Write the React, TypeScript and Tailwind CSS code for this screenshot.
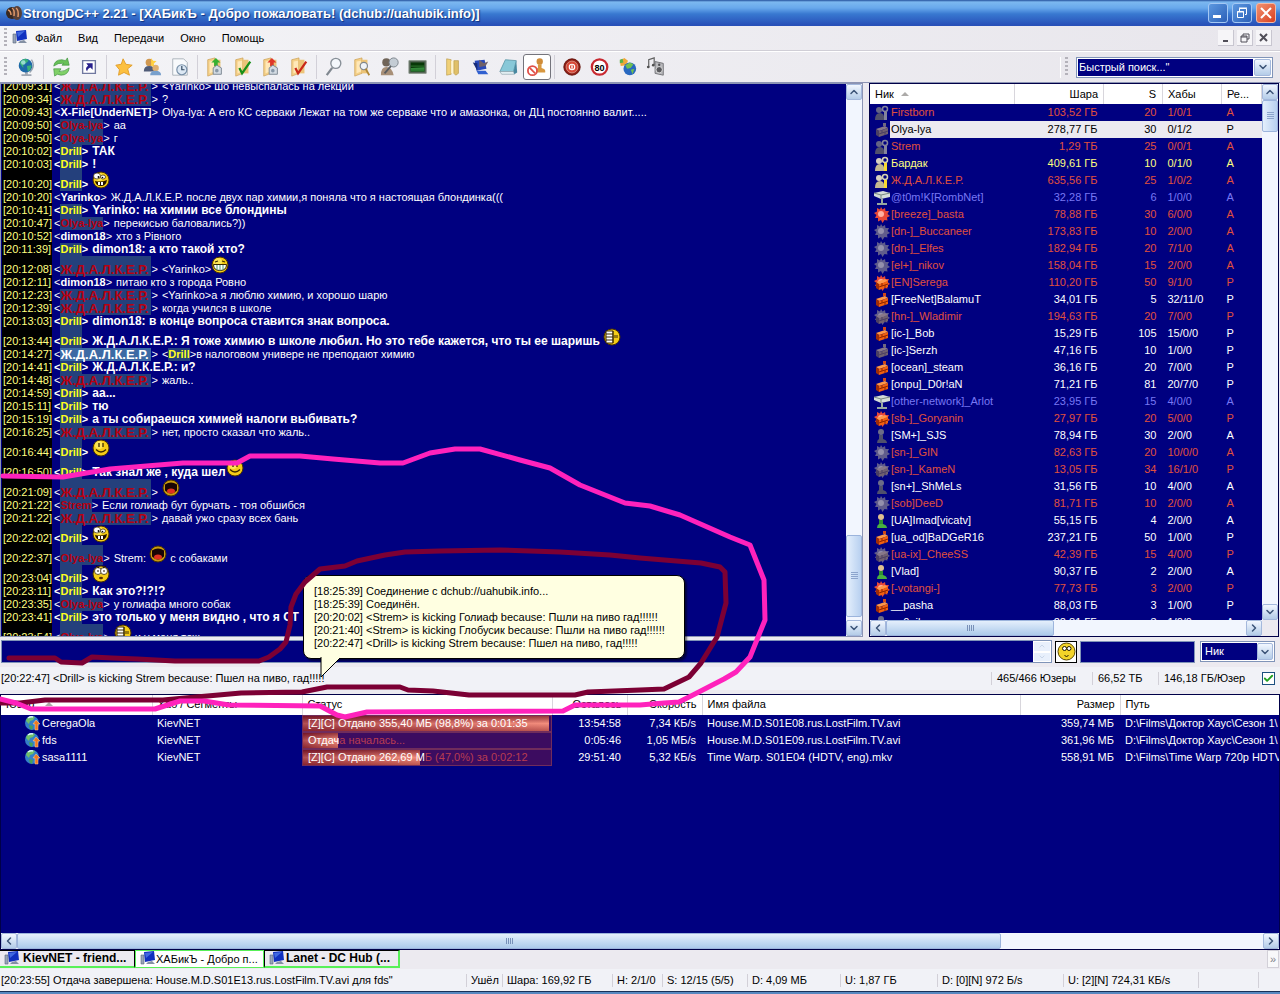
import React from "react";
import { Check, ChevronDown, ChevronLeft, ChevronRight, ChevronUp } from "lucide-react";

type EmoteKind = "crazy" | "grin" | "smile" | "shout" | "wow" | "half";

type ChatLine = {
  time: string;
  nick: string;
  style: "red" | "me" | "plain" | "fav";
  parts: (string | { emote: EmoteKind } | { nick: string })[];
};

const chat: ChatLine[] = [
  { time: "20:09:31", nick: "Ж.Д.А.Л.К.Е.Р.", style: "red", parts: ["<Yarinko> шо невыспалась на лекции"] },
  { time: "20:09:34", nick: "Ж.Д.А.Л.К.Е.Р.", style: "red", parts: ["?"] },
  { time: "20:09:43", nick: "X-File[UnderNET]", style: "plain", parts: ["Olya-lya: А его КС серваки Лежат на том же серваке что и амазонка, он ДЦ постоянно валит....."] },
  { time: "20:09:50", nick: "Olya-lya", style: "red", parts: ["аа"] },
  { time: "20:09:50", nick: "Olya-lya", style: "red", parts: ["г"] },
  { time: "20:10:02", nick: "Drill", style: "me", parts: ["ТАК"] },
  { time: "20:10:03", nick: "Drill", style: "me", parts: ["!"] },
  { time: "20:10:20", nick: "Drill", style: "me", parts: [{ emote: "crazy" }] },
  { time: "20:10:20", nick: "Yarinko", style: "plain", parts: ["Ж.Д.А.Л.К.Е.Р. после двух пар химии,я поняла что я настоящая блондинка((("] },
  { time: "20:10:41", nick: "Drill", style: "me", parts: ["Yarinko: на химии все блондины"] },
  { time: "20:10:47", nick: "Olya-lya", style: "red", parts: ["перекисью баловались?))"] },
  { time: "20:10:52", nick: "dimon18", style: "plain", parts: ["хто з Рівного"] },
  { time: "20:11:39", nick: "Drill", style: "me", parts: ["dimon18: а кто такой хто?"] },
  { time: "20:12:08", nick: "Ж.Д.А.Л.К.Е.Р.", style: "red", parts: ["<Yarinko>", { emote: "grin" }] },
  { time: "20:12:11", nick: "dimon18", style: "plain", parts: ["питаю кто з города Ровно"] },
  { time: "20:12:23", nick: "Ж.Д.А.Л.К.Е.Р.", style: "red", parts: ["<Yarinko>а я люблю химию, и хорошо шарю"] },
  { time: "20:12:39", nick: "Ж.Д.А.Л.К.Е.Р.", style: "red", parts: ["когда учился в школе"] },
  { time: "20:13:03", nick: "Drill", style: "me", parts: ["dimon18: в конце вопроса ставится знак вопроса."] },
  { time: "20:13:44", nick: "Drill", style: "me", parts: ["Ж.Д.А.Л.К.Е.Р.: Я тоже химию в школе любил. Но это тебе кажется, что ты ее шаришь ", { emote: "half" }] },
  { time: "20:14:27", nick: "Ж.Д.А.Л.К.Е.Р.", style: "fav", parts: ["<", { nick: "Drill" }, ">в налоговом универе не преподают химию"] },
  { time: "20:14:41", nick: "Drill", style: "me", parts: ["Ж.Д.А.Л.К.Е.Р.: и?"] },
  { time: "20:14:48", nick: "Ж.Д.А.Л.К.Е.Р.", style: "red", parts: ["жаль.."] },
  { time: "20:14:59", nick: "Drill", style: "me", parts: ["аа..."] },
  { time: "20:15:11", nick: "Drill", style: "me", parts: ["тю"] },
  { time: "20:15:19", nick: "Drill", style: "me", parts: ["а ты собираешся химией налоги выбивать?"] },
  { time: "20:16:25", nick: "Ж.Д.А.Л.К.Е.Р.", style: "red", parts: ["нет, просто сказал что жаль.."] },
  { time: "20:16:44", nick: "Drill", style: "me", parts: [{ emote: "smile" }] },
  { time: "20:16:50", nick: "Drill", style: "me", parts: ["Так знал же , куда шел", { emote: "smile" }] },
  { time: "20:21:09", nick: "Ж.Д.А.Л.К.Е.Р.", style: "red", parts: [{ emote: "shout" }] },
  { time: "20:21:22", nick: "Strem", style: "red", parts: ["Если голиаф бут бурчать - тоя обшибся"] },
  { time: "20:21:22", nick: "Ж.Д.А.Л.К.Е.Р.", style: "red", parts: ["давай ужо сразу всех бань"] },
  { time: "20:22:02", nick: "Drill", style: "me", parts: [{ emote: "crazy" }] },
  { time: "20:22:37", nick: "Olya-lya", style: "red", parts: ["Strem: ", { emote: "shout" }, " с собаками"] },
  { time: "20:23:04", nick: "Drill", style: "me", parts: [{ emote: "wow" }] },
  { time: "20:23:11", nick: "Drill", style: "me", parts: ["Как это?!?!?"] },
  { time: "20:23:35", nick: "Olya-lya", style: "red", parts: ["у голиафа много собак"] },
  { time: "20:23:41", nick: "Drill", style: "me", parts: ["это только у меня видно , что я СТ"] },
  { time: "20:23:54", nick: "Olya-lya", style: "red", parts: [{ emote: "half" }, " и у меня тож"] },
];

type UserRow = [icon: string, nick: string, share: string, slots: string, hubs: string, mode: string, tone: string];

const users: UserRow[] = [
  ["keyGray", "Firstborn", "103,52 ГБ", "20", "1/0/1", "A", "red"],
  ["brickGray", "Olya-lya", "278,77 ГБ", "30", "0/1/2", "P", "selected"],
  ["keyGray", "Strem", "1,29 ТБ", "25", "0/0/1", "A", "red"],
  ["key", "Бардак", "409,61 ГБ", "10", "0/1/0", "A", "yellow"],
  ["key", "Ж.Д.А.Л.К.Е.Р.", "635,56 ГБ", "25", "1/0/2", "A", "red"],
  ["server", "@t0m!K[RombNet]", "32,28 ГБ", "6", "1/0/0", "A", "blue"],
  ["gearRed", "[breeze]_basta", "78,88 ГБ", "30", "6/0/0", "A", "red"],
  ["gearGray", "[dn-]_Buccaneer", "173,83 ГБ", "10", "2/0/0", "A", "red"],
  ["gearGray", "[dn-]_Elfes", "182,94 ГБ", "20", "7/1/0", "A", "red"],
  ["gearGray", "[el+]_nikov", "158,04 ГБ", "15", "2/0/0", "A", "red"],
  ["gearBrick", "[EN]Serega", "110,20 ГБ", "50", "9/1/0", "P", "red"],
  ["brick", "[FreeNet]BalamuT", "34,01 ГБ", "5", "32/11/0", "P", "white"],
  ["gearBrickGray", "[hn-]_Wladimir", "194,63 ГБ", "20", "7/0/0", "P", "red"],
  ["brick", "[ic-]_Bob", "15,29 ГБ", "105", "15/0/0", "P", "white"],
  ["brickGray", "[ic-]Serzh", "47,16 ГБ", "10", "1/0/0", "P", "white"],
  ["brick", "[ocean]_steam", "36,16 ГБ", "20", "7/0/0", "P", "white"],
  ["brick", "[onpu]_D0r!aN", "71,21 ГБ", "81", "20/7/0", "P", "white"],
  ["server", "[other-network]_Arlot", "23,95 ГБ", "15", "4/0/0", "A", "blue"],
  ["gearBrick", "[sb-]_Goryanin", "27,97 ГБ", "20", "5/0/0", "P", "red"],
  ["personGray", "[SM+]_SJS", "78,94 ГБ", "30", "2/0/0", "A", "white"],
  ["gearGray", "[sn-]_GIN", "82,63 ГБ", "20", "10/0/0", "A", "red"],
  ["gearBrickGray", "[sn-]_KameN", "13,05 ГБ", "34", "16/1/0", "P", "red"],
  ["personGray", "[sn+]_ShMeLs", "31,56 ГБ", "10", "4/0/0", "A", "white"],
  ["gearGray", "[sob]DeeD", "81,71 ГБ", "10", "2/0/0", "A", "red"],
  ["person", "[UA]Imad[vicatv]", "55,15 ГБ", "4", "2/0/0", "A", "white"],
  ["brick", "[ua_od]BaDGeR16", "237,21 ГБ", "50", "1/0/0", "P", "white"],
  ["gearBrickGray", "[ua-ix]_CheeSS", "42,39 ГБ", "15", "4/0/0", "P", "red"],
  ["person", "[Vlad]", "90,37 ГБ", "2", "2/0/0", "A", "white"],
  ["gearBrick", "[-votangi-]", "77,73 ГБ", "3", "2/0/0", "P", "red"],
  ["brick", "__pasha", "88,03 ГБ", "3", "1/0/0", "P", "white"],
  ["personGray", "_a0nil", "22,81 ГБ", "3", "1/0/0", "A", "white"],
];

const tones: Record<string, string> = {
  red: "text-[#e0503c]",
  white: "text-white",
  yellow: "text-[#ffff80]",
  blue: "text-[#7878f4]",
  selected: "text-black",
};

const transfers = [
  { user: "CeregaOla", fill: 99, done: "[Z][C] Отдано 355,40 МБ (98,8%) за 0:01:35", rest: "", left: "13:54:58", speed: "7,34 КБ/s", file: "House.M.D.S01E08.rus.LostFilm.TV.avi", size: "359,74 МБ", path: "D:\\Films\\Доктор Хаус\\Сезон 1\\" },
  { user: "fds", fill: 14, done: "Отдач", rest: "а началась...", left: "0:05:46", speed: "1,05 МБ/s", file: "House.M.D.S01E09.rus.LostFilm.TV.avi", size: "361,96 МБ", path: "D:\\Films\\Доктор Хаус\\Сезон 1\\" },
  { user: "sasa1111", fill: 47, done: "[Z][C] Отдано 262,69 М", rest: "Б (47,0%) за 0:02:12", left: "29:51:40", speed: "5,32 КБ/s", file: "Time Warp. S01E04 (HDTV, eng).mkv", size: "558,91 МБ", path: "D:\\Films\\Time Warp 720p HDTV" },
];

function Emote({ kind }: { kind: EmoteKind }) {
  return (
    <svg className="w-[18px] h-[18px] shrink-0 self-start" viewBox="0 0 18 18">
      <circle cx="9" cy="9" r="8" fill={kind === "shout" ? "#c89a10" : "#f4cc18"} stroke="#4a3200" strokeWidth="1" />
      {kind !== "shout" && <circle cx="7" cy="6" r="4" fill="#fff070" opacity=".7" />}
      {kind === "smile" && (
        <g stroke="#3a2800" fill="none" strokeWidth="1.3">
          <path d="M7 4v4M11 4v4M4 10.500q5 5 10 0" />
        </g>
      )}
      {kind === "grin" && (
        <g>
          <path d="M4 6l3-1M11 5l3 1" stroke="#3a2800" strokeWidth="1.300" />
          <path d="M2.500 8.500h13q0 6-6.500 6t-6.500-6z" fill="#fff" stroke="#3a2800" />
          <path d="M6 9v5M9 9v6M12 9v5" stroke="#4a9a70" />
        </g>
      )}
      {kind === "crazy" && (
        <g>
          <ellipse cx="5" cy="5" rx="3.500" ry="3" fill="#fff" stroke="#3a2800" strokeWidth=".7" />
          <ellipse cx="11" cy="6" rx="2.500" ry="2" fill="#fff" stroke="#3a2800" strokeWidth=".7" />
          <circle cx="6.500" cy="6" r=".9" /><circle cx="10.500" cy="6.500" r=".8" />
          <path d="M3 10q6 1.500 12-1q-1 6-6 6t-6-5z" fill="#201000" />
          <path d="M6 11h2v3H6zM9 11h2v3H9z" fill="#fff" />
        </g>
      )}
      {kind === "shout" && (
        <g>
          <path d="M3 5.500q6-4 12 0v6q-6 6-12 0z" fill="#1a0505" />
          <ellipse cx="9" cy="12" rx="4" ry="2.500" fill="#e03020" />
        </g>
      )}
      {kind === "wow" && (
        <g>
          <circle cx="6" cy="6" r="3.500" fill="#fff" stroke="#3a2800" strokeWidth=".8" />
          <circle cx="12" cy="6" r="3.500" fill="#fff" stroke="#3a2800" strokeWidth=".8" />
          <path d="M5 6h2M11 6h2M4 1l3 2M14 1l-3 2" stroke="#201000" />
          <ellipse cx="9" cy="13" rx="2" ry="1.300" fill="#5a3000" />
        </g>
      )}
      {kind === "half" && (
        <g>
          <path d="M3 3h7v12H3z" fill="#fff" stroke="#3a2800" />
          <path d="M3 6h7M3 9h7M3 12h7M10 3v12M12 7v3M14 7v3" stroke="#3a2800" />
        </g>
      )}
    </svg>
  );
}

function UserIcon({ kind }: { kind: string }) {
  const gray = kind.endsWith("Gray");
  const gear = kind.startsWith("gear");
  return (
    <svg className="w-4 h-4 shrink-0" viewBox="0 0 16 16">
      {gear && (
        <g>
          <path d="M7 0l1.500 2.500L11 1l.5 3L15 4l-1.500 3L16 9l-3 1.500.5 3-3-.5L8.500 16 7 13l-3 1.500L4 11 1 11l1.500-3L0 6l3-1.500L3 1l3 1.500z" fill={gray ? "#605c8c" : "#e84838"} />
          <circle cx="7" cy="7" r="3" fill={gray ? "#9490ac" : "#ffb0a0"} />
        </g>
      )}
      {kind.toLowerCase().includes("brick") && (
        <g>
          <path d="M2 7l9-3 3 2-9 3z" fill={gray ? "#887888" : "#ff9848"} />
          <path d="M2 7l3 2v6l-3-2z" fill={gray ? "#4c4064" : "#a02c08"} />
          <path d="M5 9l9-3v6l-9 3z" fill={gray ? "#706070" : "#f06010"} />
          <path d="M5 12l9-3M8 8v3M11 10v3" stroke={gray ? "#4c4064" : "#902400"} />
          {!gear && <path d="M9 1h3v3H9z" fill={gray ? "#706880" : "#d04818"} />}
        </g>
      )}
      {kind.startsWith("key") && (
        <g>
          <circle cx="5" cy="5" r="3" fill={gray ? "#646484" : "#d8d0c0"} />
          <path d="M1 15q0-7 5-7t4 7z" fill={gray ? "#50506c" : "#c4b890"} />
          <circle cx="11" cy="4" r="2.500" fill="none" stroke={gray ? "#84849c" : "#d8d4b0"} strokeWidth="1.500" />
          <path d="M10 7h3v8h-3z" fill={gray ? "#84849c" : "#f8d830"} />
        </g>
      )}
      {kind === "server" && (
        <g>
          <path d="M0 3l9-2 7 2v4l-9 2-7-3z" fill="#d4dcd8" />
          <path d="M0 3l7 2 9-2M7 5v4" stroke="#788880" fill="none" />
          <path d="M7 9h2v4h4v2H3v-2h4z" fill="#98a8a0" />
        </g>
      )}
      {kind.startsWith("person") && (
        <g>
          <circle cx="7" cy="4" r="3" fill={gray ? "#6c6c88" : "#e0c090"} />
          <path d="M3 15q0-3 2-4V7h4v4q4 1 4 4z" fill={gray ? "#50506c" : "#48b040"} />
          {!gray && <path d="M5 7h4v4H5z" fill="#309030" />}
        </g>
      )}
    </svg>
  );
}

function HubIcon() {
  return (
    <svg className="w-4 h-4 shrink-0" viewBox="0 0 16 16">
      <path d="M1 4h3v9H1z" fill="#98a4b8" stroke="#586478" strokeWidth=".6" />
      <path d="M4 1l10-1 1 9-10 2z" fill="#1030c0" />
      <path d="M5 2l8-1-7 6z" fill="#4068e0" />
      <path d="M8 11l4-1 3 3H6z" fill="#8490a4" />
    </svg>
  );
}

function Globe({ arrow }: { arrow?: boolean }) {
  return (
    <svg className="w-4 h-4 shrink-0" viewBox="0 0 16 16">
      <circle cx="7" cy="8" r="7" fill="#3480c8" />
      <path d="M1 6q1-5 6-5l3 1-2 3-3 1-1 3z" fill="#70c068" />
      <path d="M4 10l4 1-1 4q-3-1-3-5z" fill="#48a058" />
      <path d="M3 3q3-2 5-1" stroke="#d8f0ff" strokeWidth="1.500" fill="none" />
      {arrow && <path d="M11 5l4 4h-2v6h-3V9H8z" fill="#f07820" stroke="#ffd0a0" strokeWidth=".5" />}
    </svg>
  );
}

function Folder() {
  return (
    <g>
      <path d="M3 3l8-2v17l-8 3z" fill="#f4d088" stroke="#c89848" strokeWidth=".7" />
      <path d="M11 3h6v15h-6z" fill="#ecc478" />
      <path d="M5 5l5-1v12l-5 2z" fill="#ffe8b8" />
    </g>
  );
}

const toolIcons: Record<string, React.ReactNode> = {
  "Подключение": (
    <g>
      <path d="M6 19h11v2H6zM10 16h3v4h-3z" fill="#a0a8b4" />
      <path d="M17 3q5 7-2 14" stroke="#98a4b0" strokeWidth="1.500" fill="none" />
      <circle cx="10.500" cy="9.500" r="7.500" fill="#1c68a8" />
      <path d="M4 7q2-5 7-5l3 2-3 3-3 1v4zM12 10l5-1q0 5-4 7z" fill="#38b078" />
      <circle cx="8" cy="6" r="2.500" fill="#c0f0f0" opacity=".7" />
    </g>
  ),
  "Переподключить": (
    <g>
      <path d="M3 10q1-7 9-7l4 1 2-3 2 8h-8l2-2q-6-1-11 3z" fill="#68c058" stroke="#389038" strokeWidth=".7" />
      <path d="M20 12q-1 8-9 8l-4-1-3 2-1-8h8l-2 3q6 0 11-4z" fill="#80d068" stroke="#389038" strokeWidth=".7" />
    </g>
  ),
  "Ярлык": (
    <g>
      <path d="M4 4h14v14H4z" fill="#fff" stroke="#7078a0" strokeWidth="1.500" />
      <path d="M8 7h7v7l-2.500-2.500Q9 13 9 16q-3-4 1-6.500z" fill="#28208c" />
    </g>
  ),
  "Избранные": <path d="M10 2l3 6 7 1-5 4 2 7-6-3-6 3 1-6-4-5 6-1z" fill="#fcc040" stroke="#e09c28" />,
  "Пользователи": (
    <g>
      <circle cx="8" cy="6" r="4" fill="#d09850" /><path d="M2 16q0-6 6-6t6 6z" fill="#505c78" />
      <path d="M10 1l2 3 4 .5-3 3 1 4-4-2z" fill="#ffd040" />
      <circle cx="15" cy="12" r="3.500" fill="#e0b070" /><path d="M9 20q0-5 6-5t6 5z" fill="#78a0cc" />
    </g>
  ),
  "Последние хабы": (
    <g>
      <path d="M3 2h12l4 4v14H3z" fill="#f8fafc" stroke="#a8b0b8" />
      <circle cx="13" cy="14" r="5.500" fill="#dce8f4" stroke="#7890a8" strokeWidth="1.300" />
      <path d="M13 10v4h3" stroke="#304860" strokeWidth="1.300" fill="none" />
    </g>
  ),
  "Очередь": (
    <g><Folder /><path d="M12 1l5 5h-3v4h-4V6H7z" fill="#38b030" /><path d="M9 12l4-3 5 3v7H9z" fill="#d4dce4" stroke="#788490" /><circle cx="13" cy="15" r="2" fill="#8898a8" /></g>
  ),
  "Скачанные": (
    <g><Folder /><path d="M7 12l3 6L19 5" fill="none" stroke="#189018" strokeWidth="2.500" /></g>
  ),
  "Ожидающие": (
    <g><Folder /><path d="M12 1l5 5h-3v4h-4V6H7z" fill="#e03828" /><path d="M9 12l4-3 5 3v7H9z" fill="#d4dce4" stroke="#788490" /><circle cx="13" cy="15" r="2" fill="#8898a8" /></g>
  ),
  "Отданные": (
    <g><Folder /><path d="M7 12l3 6L19 5" fill="none" stroke="#c82818" strokeWidth="2.500" /></g>
  ),
  "Поиск": (
    <g>
      <circle cx="13" cy="7" r="5.500" fill="#f4f8fc" stroke="#889098" strokeWidth="1.500" />
      <path d="M9 12l-6 8" stroke="#808890" strokeWidth="2.500" />
    </g>
  ),
  "ADL поиск": (
    <g><Folder /><circle cx="13" cy="10" r="4" fill="#f0f4f8" stroke="#808890" strokeWidth="1.300" /><path d="M15 13l4 7" stroke="#b08838" strokeWidth="2" /></g>
  ),
  "Слежение": (
    <g>
      <circle cx="7" cy="6" r="4.500" fill="#706458" /><path d="M1 20q0-9 6-9t8 9z" fill="#a89078" />
      <circle cx="15" cy="6" r="5" fill="#c4ccd4" stroke="#788088" /><path d="M12 10l-7 8" stroke="#585c60" strokeWidth="2" />
    </g>
  ),
  "Статистика": (
    <g>
      <path d="M1 4h19v14H1z" fill="#506050" stroke="#889488" /><path d="M3 6h15v10H3z" fill="#083808" />
      <path d="M3 12l15-1v5H3z" fill="#287830" /><path d="M3 10h15M3 13h15" stroke="#48a048" strokeWidth=".7" />
    </g>
  ),
  "Файл-лист": (
    <g>
      <path d="M4 2l5 1v16l-5 1z" fill="#f0d078" stroke="#b89848" strokeWidth=".7" /><path d="M9 4h4v14H9z" fill="#fff4d0" />
      <path d="M12 4h5v14l-3 2-2-2z" fill="#e0c068" stroke="#b89848" strokeWidth=".7" />
    </g>
  ),
  "Настройки": (
    <g>
      <path d="M4 4l11-1 2 10-11 2z" fill="#2848b8" /><path d="M6 15h10l3 4H8z" fill="#3060d0" />
      <path d="M9 3l5 4 5-2-3 5-7 1z" fill="#706068" /><path d="M2 6l5 1v8z" fill="#182c78" />
    </g>
  ),
  "Блокнот": (
    <g>
      <path d="M7 3l12 1-3 12H1z" fill="#88c8d8" stroke="#5090a0" strokeWidth=".8" /><path d="M1 16h15l1 3H3z" fill="#e4f0f4" stroke="#88a0a8" strokeWidth=".7" />
      <path d="M16 16l3-12 1 13-3 2z" fill="#4888a0" />
    </g>
  ),
  "Отошёл": (
    <g>
      <circle cx="14" cy="5" r="3.500" fill="#d08c38" /><path d="M8 17q0-3 4-5V8h4v4q5 1 4 5z" fill="#d89840" />
      <circle cx="6" cy="15" r="5" fill="#fff" stroke="#e05048" strokeWidth="2" /><path d="M3 12l6 6" stroke="#e05048" strokeWidth="2" />
    </g>
  ),
  "Выключение": (
    <g>
      <circle cx="11" cy="11" r="9" fill="#901c14" stroke="#601008" /><circle cx="11" cy="11" r="6.500" fill="#d84838" stroke="#d89080" />
      <circle cx="11" cy="11" r="3" fill="none" stroke="#fff" strokeWidth="1.300" /><path d="M11 9v4" stroke="#fff" strokeWidth="1.500" />
    </g>
  ),
  "Ограничитель": (
    <g>
      <circle cx="10.500" cy="11" r="8.500" fill="#fff" stroke="#c82830" strokeWidth="2.500" />
      <text x="10.500" y="15" textAnchor="middle" className="text-[10px] font-bold">80</text>
    </g>
  ),
  "Обновление": (
    <g>
      <path d="M2 4l5-3 4 3-2 5-6 1z" fill="#f0a838" /><path d="M2 3l3-1 1 4-4 1z" fill="#58b048" />
      <circle cx="13" cy="13" r="7" fill="#2868c0" /><path d="M8 9l5-3 4 2-3 4-4 1zM14 14l4-1-2 6z" fill="#70c050" />
    </g>
  ),
  "Музыка": (
    <g>
      <path d="M3 11V3l6-2v8" fill="none" stroke="#606060" strokeWidth="1.300" /><circle cx="2.500" cy="11" r="1.500" fill="#505050" /><circle cx="8" cy="9" r="1.500" fill="#505050" />
      <path d="M10 5l9 2v13l-9-2z" fill="#b8b8bc" stroke="#707074" /><circle cx="14.500" cy="14" r="3.500" fill="#58585c" stroke="#e0e0e0" />
      <circle cx="14.500" cy="8.500" r="1.300" fill="#505054" />
    </g>
  ),
};

const toolGroups = [
  ["Подключение"],
  ["Переподключить", "Ярлык"],
  ["Избранные", "Пользователи", "Последние хабы"],
  ["Очередь", "Скачанные", "Ожидающие", "Отданные"],
  ["Поиск", "ADL поиск", "Слежение", "Статистика"],
  ["Файл-лист", "Настройки", "Блокнот", "Отошёл"],
  ["Выключение", "Ограничитель", "Обновление", "Музыка"],
];

function Grip() {
  return <div className="w-[3px] h-5 bg-[repeating-linear-gradient(to_bottom,#b4b2ba_0px,#b4b2ba_2px,transparent_2px,transparent_4px)]" />;
}

const scrollBtn =
  "flex items-center justify-center shrink-0 w-4 h-4 rounded-[2px] border border-[#a4b8dc] bg-linear-to-b from-[#f2f7ff] to-[#b4cce8] text-[#3c5478]";

function ThumbLines() {
  return <div className="w-[7px] h-[8px] bg-[repeating-linear-gradient(to_bottom,#8ca4cc_0px,#8ca4cc_1px,transparent_1px,transparent_2px)]" />;
}

function VScroll({ atEnd, thumb }: { atEnd?: boolean; thumb: string }) {
  return (
    <div className="flex flex-col w-4 shrink-0 bg-[#f2f6fe]">
      <button className={scrollBtn} aria-label="Вверх"><ChevronUp size={12} strokeWidth={3} /></button>
      <div className={`flex flex-col flex-1 min-h-0 ${atEnd ? "justify-end pb-[3px]" : ""}`}>
        <div className={`${thumb} flex items-center justify-center rounded-[2px] border border-[#9cb4dc] bg-linear-to-r from-[#e4effc] to-[#b8d0f0]`}>
          <ThumbLines />
        </div>
      </div>
      <button className={scrollBtn} aria-label="Вниз"><ChevronDown size={12} strokeWidth={3} /></button>
    </div>
  );
}

function HScroll({ thumb }: { thumb: string }) {
  return (
    <div className="flex flex-1 h-4 bg-[#f2f6fe]">
      <button className={scrollBtn} aria-label="Влево"><ChevronLeft size={12} strokeWidth={3} /></button>
      <div className="flex-1 flex">
        <div className={`${thumb} flex items-center justify-center rounded-[2px] border border-[#9cb4dc] bg-linear-to-b from-[#e4effc] to-[#accaea]`}>
          <div className="w-[7px] h-[6px] bg-[repeating-linear-gradient(to_right,#7890b8_0px,#7890b8_1px,transparent_1px,transparent_2px)]" />
        </div>
      </div>
      <button className={scrollBtn} aria-label="Вправо"><ChevronRight size={12} strokeWidth={3} /></button>
    </div>
  );
}

function TitleBar() {
  return (
    <header className="flex items-center h-[26px] shrink-0 pl-[6px] pr-1 bg-[linear-gradient(to_bottom,#24509c_0px,#7cb8f0_2px,#68a8ec_8px,#3878d0_14px,#2850b8_25px)] text-white">
      <svg className="w-4 h-4 mr-px" viewBox="0 0 16 16">
        <ellipse cx="6" cy="8" rx="6" ry="6" fill="#382820" />
        <ellipse cx="11" cy="8" rx="5" ry="7" fill="#584038" />
        <path d="M2 5q3 1 3 5M6 3q3 2 2 8M10 3q3 2 2 9" stroke="#e09868" strokeWidth="1.500" fill="none" />
      </svg>
      <h1 className="flex-1 text-[13px] font-bold whitespace-nowrap [text-shadow:1px_1px_1px_#10307c]">
        StrongDC++ 2.21 - [ХАБикЪ - Добро пожаловать! (dchub://uahubik.info)]
      </h1>
      <div className="flex gap-1">
        <button aria-label="Свернуть" className="flex items-end p-1 w-5 h-5 rounded-[3px] border border-[#a4c8f4] bg-linear-to-br from-[#5c98e0] to-[#2c60b8]">
          <span className="w-2 h-[3px] bg-white" />
        </button>
        <button aria-label="Восстановить" className="flex items-center justify-center w-5 h-5 rounded-[3px] border border-[#a4c8f4] bg-linear-to-br from-[#5c98e0] to-[#2c60b8]">
          <svg className="w-3 h-3" viewBox="0 0 12 12" fill="none" stroke="#fff"><path d="M3.500 4V1.500h7v6H9M3 1h8M1.500 4.500h6v6h-6zM1 5h7" /></svg>
        </button>
        <button aria-label="Закрыть" className="flex items-center justify-center w-5 h-5 rounded-[3px] border border-[#f4b8a4] bg-linear-to-br from-[#f09070] to-[#d83c18]">
          <svg className="w-3 h-3" viewBox="0 0 12 12" stroke="#fff" strokeWidth="2"><path d="M1 1l10 10M11 1L1 11" /></svg>
        </button>
      </div>
    </header>
  );
}

function MenuBar() {
  return (
    <nav className="flex items-center h-[25px] shrink-0 pl-1 pr-2 border-b border-[#d0ced6] bg-linear-to-r from-[#f4f4f7] to-[#e8e6ec]">
      <Grip />
      <div className="ml-[5px] mr-[7px]"><HubIcon /></div>
      <div className="flex-1 flex gap-4">
        {["Файл", "Вид", "Передачи", "Окно", "Помощь"].map((m) => (
          <button key={m}>{m}</button>
        ))}
      </div>
      <div className="flex gap-[3px] text-[#504e58]">
        {["M3 9h5", "M4 4V2h6v5H8M2 4h6v6H2zM2 5h6", "M2 2l7 7M9 2l-7 7"].map((d, i) => (
          <button key={d} aria-label={["Свернуть окно", "Восстановить окно", "Закрыть окно"][i]} className="flex items-center justify-center w-4 h-4 bg-[#f6f5f8] border-r border-b border-[#c8c6d0]">
            <svg className="w-3 h-3" viewBox="0 0 12 12" fill="none" stroke="currentColor" strokeWidth={i === 1 ? 1 : 2}><path d={d} /></svg>
          </button>
        ))}
      </div>
    </nav>
  );
}

function ToolBar() {
  return (
    <div className="flex items-center h-8 shrink-0 pl-1 pr-[7px] border-t border-white border-b border-b-[#8c94b4] bg-linear-to-r from-[#f4f4f7] to-[#e8e6ec]">
      <Grip />
      <div className="flex flex-1 items-center ml-[5px]">
        {toolGroups.map((group, gi) => (
          <React.Fragment key={gi}>
            {gi > 0 && <div className="w-px h-6 mx-[3px] bg-[#d2d0d8]" />}
            {group.map((name) => (
              <button
                key={name}
                aria-label={name}
                className={
                  name === "Отошёл"
                    ? "flex items-center justify-center w-7 h-[26px] rounded-[3px] border border-[#74747c] bg-white"
                    : "flex items-center justify-center w-7 h-[26px]"
                }
              >
                <svg className="w-5 h-5" viewBox="0 0 22 22">{toolIcons[name]}</svg>
              </button>
            ))}
          </React.Fragment>
        ))}
      </div>
      <div className="flex items-center gap-2 border-l border-white pl-1">
        <Grip />
        <div className="flex w-[197px] h-[21px] border border-[#8094b8] bg-white p-px">
          <input aria-label="Быстрый поиск" defaultValue={'Быстрый поиск..."'} className="flex-1 min-w-0 bg-[#000080] text-white pl-px outline-none" />
          <button aria-label="Открыть список" className="flex items-center justify-center w-[17px] ml-px rounded-[2px] border border-[#a4b8dc] bg-linear-to-b from-[#f2f7ff] to-[#b4cce8] text-[#3c5478]">
            <ChevronDown size={12} strokeWidth={3} />
          </button>
        </div>
      </div>
    </div>
  );
}

function ChatRow({ line }: { line: ChatLine }) {
  const tall = line.parts.some((p) => typeof p !== "string" && "emote" in p);
  const bold = line.style === "me";
  const nickStyle = {
    red: "bg-[#24407c] text-[#b80010]",
    me: "bg-[#24407c] text-[#ffff20]",
    plain: "text-white",
    fav: "bg-[#3c6aa4] text-white",
  }[line.style];
  return (
    <li className={`flex shrink-0 ${tall ? "h-5" : "h-[13px]"} ${bold ? "font-bold" : ""}`}>
      <span className="flex items-end w-[50px] shrink-0 pl-px bg-black text-[#ffff80] font-normal">[{line.time}]</span>
      <span className="flex items-end pl-[2px]">&lt;</span>
      <span className={`flex items-end font-bold ${nickStyle} ${line.nick.startsWith("Ж") ? "w-[91px] text-[13px]" : ""}`}>{line.nick}</span>
      <span className="flex items-end pr-1">&gt;</span>
      {line.parts.map((p, i) => {
        if (typeof p === "string") return <span key={i} className={`flex items-end whitespace-pre ${bold ? "text-[12px]" : ""}`}>{p}</span>;
        if ("emote" in p) return <Emote key={i} kind={p.emote} />;
        return <span key={i} className="flex items-end font-bold bg-[#24407c] text-[#ffff20]">{p.nick}</span>;
      })}
    </li>
  );
}

function Chat() {
  return (
    <section className="flex flex-1 min-w-0 border border-[#8c94b4] bg-[#000080]">
      <ul className="flex-1 min-w-0 overflow-hidden pl-px text-white leading-[13px] whitespace-nowrap">
        <li className="-mt-1" />
        {chat.map((line, i) => (
          <ChatRow key={i} line={line} />
        ))}
      </ul>
      <VScroll atEnd thumb="h-[82px]" />
    </section>
  );
}

function UserList() {
  return (
    <section className="flex flex-col w-[410px] shrink-0 border border-[#000048] bg-[#000080]">
      <div className="flex flex-1 min-h-0">
        <div className="flex-1 min-w-0 overflow-hidden">
          <table className="w-full table-fixed border-collapse whitespace-nowrap">
            <colgroup>
              <col />
              <col className="w-[89px]" />
              <col className="w-[59px]" />
              <col className="w-[59px]" />
              <col className="w-10" />
            </colgroup>
            <thead>
              <tr className="h-5 bg-white text-black">
                <th className="font-normal text-left pl-[5px] border-r border-[#d8d6dc]">
                  Ник <span className="inline-block ml-1 mb-[2px] border-x-4 border-b-4 border-x-transparent border-b-[#acaaa8]" />
                </th>
                <th className="font-normal text-right pr-[5px] border-r border-[#d8d6dc]">Шара</th>
                <th className="font-normal text-right pr-[6px] border-r border-[#d8d6dc]">S</th>
                <th className="font-normal text-left pl-[5px] border-r border-[#d8d6dc]">Хабы</th>
                <th className="font-normal text-left pl-[5px] border-r border-[#d8d6dc]">Ре...</th>
              </tr>
            </thead>
            <tbody>
              {users.map(([icon, nick, share, slots, hubs, mode, tone]) => {
                const cell = tone === "selected" ? "bg-[#eceaf0]" : "";
                return (
                  <tr key={nick} className={`h-[17px] leading-[17px] ${tones[tone]}`}>
                    <td className="p-0">
                      <div className="flex items-center h-[17px] pl-1">
                        <UserIcon kind={icon} />
                        <span className={`flex-1 pl-px ${cell}`}>{nick}</span>
                      </div>
                    </td>
                    <td className={`text-right pr-[6px] ${cell}`}>{share}</td>
                    <td className={`text-right pr-[6px] ${cell}`}>{slots}</td>
                    <td className={`pl-[5px] ${cell}`}>{hubs}</td>
                    <td className={`pl-[5px] ${cell}`}>{mode}</td>
                  </tr>
                );
              })}
            </tbody>
          </table>
        </div>
        <VScroll thumb="h-8" />
      </div>
      <div className="flex">
        <HScroll thumb="w-[168px]" />
        <div className="w-4 bg-[#eceaf0]" />
      </div>
    </section>
  );
}

function MessageRow() {
  return (
    <div className="flex items-center h-[30px] shrink-0 pl-px pr-[5px] text-white">
      <div className="flex flex-1 h-[23px] border border-[#8094b8] bg-[#000080]">
        <textarea aria-label="Сообщение" className="flex-1 resize-none outline-none" />
        <div className="flex flex-col w-[18px] bg-[#e8f0fc] text-[#b8c8e0]">
          <button aria-label="Строка вверх" className="flex flex-1 items-center justify-center border border-white"><ChevronUp size={8} /></button>
          <button aria-label="Строка вниз" className="flex flex-1 items-center justify-center border border-white"><ChevronDown size={8} /></button>
        </div>
      </div>
      <button aria-label="Смайлы" className="flex items-center justify-center w-[22px] h-[22px] mx-[3px] border border-black bg-white">
        <svg className="w-[19px] h-[19px]" viewBox="0 0 19 19">
          <circle cx="9.500" cy="9.500" r="8.500" fill="#f4d428" stroke="#5c4800" />
          <circle cx="7.500" cy="6.500" r="2" fill="#fff" stroke="#201800" /><circle cx="12" cy="6.500" r="2" fill="#fff" stroke="#201800" />
          <path d="M7.500 13.500q2 2 4 0" stroke="#201800" fill="none" />
        </svg>
      </button>
      <input aria-label="Фильтр" className="w-[115px] h-[22px] border border-[#8094b8] bg-[#000080] outline-none" />
      <div className="flex w-[75px] h-[21px] ml-[5px] border border-[#8094b8] bg-white p-px">
        <select aria-label="Столбец фильтра" className="flex-1 min-w-0 appearance-none bg-[#000080] text-white pl-[3px] outline-none">
          <option>Ник</option>
        </select>
        <span className="flex items-center justify-center w-4 rounded-[2px] border border-[#a4b8dc] bg-linear-to-b from-[#f2f7ff] to-[#b4cce8] text-[#3c5478]">
          <ChevronDown size={12} strokeWidth={3} />
        </span>
      </div>
    </div>
  );
}

function HubStatus() {
  return (
    <div className="flex items-center h-[23px] shrink-0 pr-[5px] bg-[#f1f2f7]">
      <p className="flex-1 pl-px whitespace-nowrap">[20:22:47] &lt;Drill&gt; is kicking Strem because: Пшел на пиво, гад!!!!!</p>
      <p className="w-[101px] border-l border-[#d2d0d8] pl-[5px]">465/466 Юзеры</p>
      <p className="w-[66px] border-l border-[#d2d0d8] pl-[5px]">66,52 ТБ</p>
      <p className="w-[104px] border-l border-[#d2d0d8] pl-[5px]">146,18 ГБ/Юзер</p>
      <span className="relative flex">
        <input
          type="checkbox"
          defaultChecked
          aria-label="Показывать список пользователей"
          className="peer appearance-none w-[13px] h-[13px] border border-[#1c5180] bg-white"
        />
        <Check size={11} strokeWidth={4} className="absolute left-px top-px hidden peer-checked:block text-[#21a121] pointer-events-none" />
      </span>
    </div>
  );
}

function Transfers() {
  const th = "font-normal border-r border-[#d8d6dc]";
  return (
    <section className="flex flex-col flex-[255] min-h-0 mt-1 border border-[#000048] bg-[#000080] text-white">
      <div className="flex-1 min-h-0 overflow-hidden">
        <table className="w-full table-fixed border-collapse whitespace-nowrap">
          <colgroup>
            <col className="w-[151px]" />
            <col className="w-[150px]" />
            <col className="w-[250px]" />
            <col className="w-[75px]" />
            <col className="w-[75px]" />
            <col />
            <col className="w-[100px]" />
            <col className="w-[159px]" />
          </colgroup>
          <thead>
            <tr className="h-5 bg-white text-black">
              <th className={`${th} text-left pl-[5px]`}>
                Юзер <span className="inline-block ml-2 mb-[2px] border-x-4 border-b-4 border-x-transparent border-b-[#acaaa8]" />
              </th>
              <th className={`${th} text-left pl-[5px]`}>Хаб / Сегменты</th>
              <th className={`${th} text-left pl-[5px]`}>Статус</th>
              <th className={`${th} text-right pr-[5px]`}>Осталось</th>
              <th className={`${th} text-right pr-[5px]`}>Скорость</th>
              <th className={`${th} text-left pl-[5px]`}>Имя файла</th>
              <th className={`${th} text-right pr-[5px]`}>Размер</th>
              <th className="font-normal text-left pl-[5px]">Путь</th>
            </tr>
          </thead>
          <tbody>
            {transfers.map((t) => (
              <tr key={t.user} className="h-[17px] leading-[17px]">
                <td className="p-0">
                  <div className="flex items-center gap-px h-[17px] pl-6"><Globe arrow />{t.user}</div>
                </td>
                <td className="pl-[5px]">KievNET</td>
                <td className="p-0">
                  <div className="grid h-[17px] border border-[#702c5c] bg-[#3c0c60]">
                    <div
                      className="col-start-1 row-start-1 bg-[linear-gradient(to_bottom,rgba(90,0,20,.6),rgba(255,160,140,.25)_50%,rgba(110,10,20,.4)),linear-gradient(to_right,#983440,#f08878)]"
                      style={{ width: `${t.fill}%` }}
                    />
                    <span className="col-start-1 row-start-1 pl-[5px] leading-[15px] text-white">
                      {t.done}<span className="text-[#b83c50]">{t.rest}</span>
                    </span>
                  </div>
                </td>
                <td className="text-right pr-[6px]">{t.left}</td>
                <td className="text-right pr-[6px]">{t.speed}</td>
                <td className="pl-[5px]">{t.file}</td>
                <td className="text-right pr-[6px]">{t.size}</td>
                <td className="pl-[5px] overflow-hidden">{t.path}</td>
              </tr>
            ))}
          </tbody>
        </table>
      </div>
      <div className="flex"><HScroll thumb="w-[79%]" /></div>
    </section>
  );
}

function HubTabs() {
  return (
    <div className="flex h-[19px] shrink-0 items-start justify-between pr-[1px]">
      <div className="flex text-[12px] font-bold text-black">
        <button className="flex items-center gap-[3px] w-[135px] h-[18px] pl-1 border-t border-r border-black border-b-2 border-b-[#58f058] whitespace-nowrap"><HubIcon />KievNET - friend...</button>
        <button className="flex items-center w-[129px] h-[18px] pl-1 border border-[#58f058] bg-white text-[11px] font-normal whitespace-nowrap"><HubIcon />ХАБикЪ - Добро п...</button>
        <button className="flex items-center gap-px w-[136px] h-[18px] pl-1 border-t border-t-black border-l border-l-black border-r-2 border-r-[#58f058] border-b-2 border-b-[#58f058] whitespace-nowrap"><HubIcon />Lanet - DC Hub (...</button>
      </div>
      <button aria-label="Ещё вкладки" className="w-3 h-[18px] border border-[#d2d0d8] bg-[#f8f8fa] text-[#808088] leading-4">»</button>
    </div>
  );
}

function StatusBar() {
  const cell = "border-l border-[#d2d0d8] pl-1 whitespace-nowrap";
  return (
    <footer className="flex items-center h-[22px] shrink-0 bg-[#f1f2f7]">
      <p className="flex-1 min-w-0 pl-px whitespace-nowrap">[20:23:55] Отдача завершена: House.M.D.S01E13.rus.LostFilm.TV.avi для fds"</p>
      <p className={`w-9 ${cell}`}>Ушёл</p>
      <p className={`w-[110px] ${cell}`}>Шара: 169,92 ГБ</p>
      <p className={`w-[50px] ${cell}`}>H: 2/1/0</p>
      <p className={`w-[85px] ${cell}`}>S: 12/15 (5/5)</p>
      <p className={`w-[93px] ${cell}`}>D: 4,09 МБ</p>
      <p className={`w-[97px] ${cell}`}>U: 1,87 ГБ</p>
      <p className={`w-[126px] ${cell}`}>D: [0][N] 972 Б/s</p>
      <p className={`w-[135px] ${cell}`}>U: [2][N] 724,31 КБ/s</p>
      <div className="w-[60px] h-4 border-l border-[#d2d0d8]" />
      <div className="w-[22px] h-4 border-l border-[#d2d0d8]" />
    </footer>
  );
}

function Balloon() {
  return (
    <div className="absolute left-[303px] top-[575px] w-[382px] h-[84px] rounded-[8px] border border-black bg-[#ffffe1] pt-[9px] pl-[10px] leading-[13px] whitespace-nowrap shadow-[2px_2px_2px_rgba(0,0,0,0.5)]">
      <p>[18:25:39] Соединение с dchub://uahubik.info...</p>
      <p>[18:25:39] Соединён.</p>
      <p>[20:20:02] &lt;Strem&gt; is kicking Голиаф because: Пшли на пиво гад!!!!!!</p>
      <p>[20:21:40] &lt;Strem&gt; is kicking Глобусик because: Пшли на пиво гад!!!!!!</p>
      <p>[20:22:47] &lt;Drill&gt; is kicking Strem because: Пшел на пиво, гад!!!!!</p>
      <svg className="absolute left-4 top-[81px] w-6 h-[22px]" viewBox="0 0 24 22">
        <path d="M1 0v20L20 1" fill="#ffffe1" stroke="#000" />
        <path d="M2 0h18" stroke="#ffffe1" strokeWidth="2" />
      </svg>
    </div>
  );
}

// freehand marker strokes over the window
function Marker() {
  return (
    <svg className="absolute left-0 top-0 w-[1280px] h-[994px] pointer-events-none" viewBox="0 0 1280 994" fill="none" strokeLinecap="round" strokeLinejoin="round" strokeWidth="5">
      <path
        stroke="#7c0034"
        d="M9 658H55L61 662L82 663L92 657L112 658L137 659L175 661H259L269 657L280 649L286 642L290 625L291 607L296 594L305 582L320 569L345 566L357 561L385 555L405 552L440 551L500 550L560 552L610 555L640 558L701 563L720 567L725 572L726 603L717 637L701 663L689 677L664 689L640 690L588 692L575 695H469L433 691L408 690L400 687H327L302 692L241 693L196 697L163 700H45L20 703H0"
      />
      <path
        stroke="#ff22bc"
        d="M3 476L63 477L110 469L183 463H237L250 456H300L333 459L380 463H403L430 453L455 449H480L520 460L550 468L580 485L625 503L650 506L680 515L730 537L750 545L756 560L764 580L765 620L750 657L736 672L724 679L693 695L679 702L664 703L640 705H575L563 711L367 712L345 717L337 715L320 706L229 705L204 701H180L155 709H31L16 703L0 699"
      />
    </svg>
  );
}

export default function App() {
  return (
    <div className="relative flex flex-col h-screen overflow-hidden bg-[#eceaf0] text-[11px] leading-[13px] text-black [font-family:'Liberation_Sans',Arial,sans-serif]">
      <TitleBar />
      <MenuBar />
      <ToolBar />
      <main className="flex flex-[555] min-h-0 gap-[6px] pr-px">
        <Chat />
        <UserList />
      </main>
      <MessageRow />
      <HubStatus />
      <Transfers />
      <HubTabs />
      <StatusBar />
      <div className="h-[3px] shrink-0 border-t border-[#183058] bg-[#5888c0]" />
      <Balloon />
      <Marker />
    </div>
  );
}
